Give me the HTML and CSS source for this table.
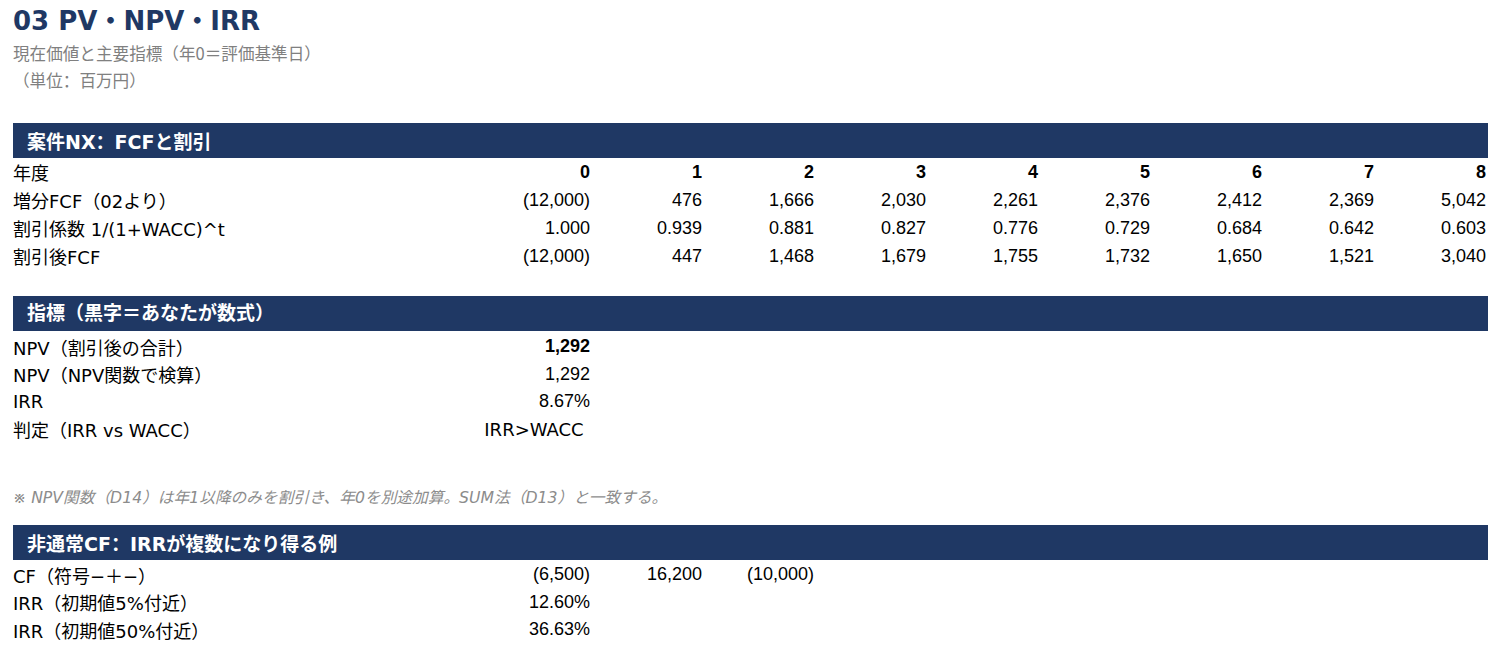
FILE: index.html
```html
<!DOCTYPE html>
<html lang="ja">
<head>
<meta charset="utf-8">
<link rel="stylesheet" href="styles.css">
</head>
<body>
<div class="page">
  <h1 class="title">03 PV・NPV・IRR</h1>
  <div class="sub">現在価値と主要指標（年0＝評価基準日）</div>
  <div class="sub unit">（単位<span lang="zh-CN">：</span>百万円）</div>

  <div class="bar bar1">案件NX<span lang="zh-CN">：</span>FCFと割引</div>
  <div class="grid g1">
    <div class="lbl">年度</div>
    <div class="num b">0</div><div class="num b">1</div><div class="num b">2</div><div class="num b">3</div><div class="num b">4</div><div class="num b">5</div><div class="num b">6</div><div class="num b">7</div><div class="num b">8</div>

    <div class="lbl">増分FCF（02より）</div>
    <div class="num">(12,000)</div><div class="num">476</div><div class="num">1,666</div><div class="num">2,030</div><div class="num">2,261</div><div class="num">2,376</div><div class="num">2,412</div><div class="num">2,369</div><div class="num">5,042</div>

    <div class="lbl">割引係数 1/(1+WACC)^t</div>
    <div class="num">1.000</div><div class="num">0.939</div><div class="num">0.881</div><div class="num">0.827</div><div class="num">0.776</div><div class="num">0.729</div><div class="num">0.684</div><div class="num">0.642</div><div class="num">0.603</div>

    <div class="lbl">割引後FCF</div>
    <div class="num">(12,000)</div><div class="num">447</div><div class="num">1,468</div><div class="num">1,679</div><div class="num">1,755</div><div class="num">1,732</div><div class="num">1,650</div><div class="num">1,521</div><div class="num">3,040</div>
  </div>

  <div class="bar bar2">指標（黒字＝あなたが数式）</div>
  <div class="grid g2">
    <div class="lbl">NPV（割引後の合計）</div><div class="num b">1,292</div>
    <div class="lbl">NPV（NPV関数で検算）</div><div class="num">1,292</div>
    <div class="lbl">IRR</div><div class="num">8.67%</div>
    <div class="lbl">判定（IRR vs WACC）</div><div class="txt">IRR&gt;WACC</div>
  </div>

  <div class="note">※ NPV関数（D14）は年1以降のみを割引き、年0を別途加算。SUM法（D13）と一致する。</div>

  <div class="bar bar3">非通常CF<span lang="zh-CN">：</span>IRRが複数になり得る例</div>
  <div class="grid g3">
    <div class="lbl">CF（符号−＋−）</div><div class="num">(6,500)</div><div class="num">16,200</div><div class="num">(10,000)</div>
    <div class="lbl">IRR（初期値5%付近）</div><div class="num">12.60%</div>
    <div class="lbl">IRR（初期値50%付近）</div><div class="num">36.63%</div>
  </div>
</div>
</body>
</html>
```

FILE: styles.css
```css
* { box-sizing: border-box; }
html, body { margin: 0; padding: 0; background: #ffffff; }
body {
  font-family: "DejaVu Sans", "Noto Sans CJK JP", sans-serif;
  color: #000;
}
.page {
  padding: 6px 12px 0 13px;
  width: 1500px;
}
.title {
  margin: 0;
  font-family: "DejaVu Sans", "Noto Sans CJK JP", sans-serif;
  font-weight: bold;
  font-size: 26px;
  line-height: 30px;
  color: #1f3864;
}
.sub {
  font-family: "Noto Sans CJK JP", sans-serif;
  font-size: 16.6px;
  line-height: 27px;
  color: #808080;
  margin-top: 4px;
}
.sub.unit { margin-top: 0; }
.bar {
  background: #1f3864;
  color: #fff;
  font-family: "DejaVu Sans", "Noto Sans CJK JP", sans-serif;
  font-weight: bold;
  font-size: 19px;
  height: 35px;
  line-height: 35px;
  padding-left: 14px;
  width: 1475px;
}
.bar1 { margin-top: 29px; }
.bar2 { margin-top: 26px; }
.bar3 { margin-top: 0; }
.grid {
  display: grid;
  grid-template-columns: 465px repeat(9, 112px);
  grid-auto-rows: 28px;
  align-items: center;
}
.g2 { grid-auto-rows: 27.5px; padding-top: 2px; }
.g3 { grid-auto-rows: 27.5px; padding-top: 1px; }
.lbl {
  grid-column: 1;
  font-family: "DejaVu Sans", "Noto Sans CJK JP", sans-serif;
  font-size: 18px;
  white-space: nowrap;
}
[lang="zh-CN"] { font-family: "Noto Sans CJK SC", sans-serif; }
.num {
  text-align: right;
  font-family: "Liberation Sans", Arial, sans-serif;
  font-size: 18px;
  white-space: nowrap;
}
.txt {
  text-align: center;
  font-family: "DejaVu Sans", sans-serif;
  font-size: 18px;
  white-space: nowrap;
}
.b { font-weight: bold; }
.note {
  font-family: "DejaVu Sans", "Noto Sans CJK JP", sans-serif;
  font-size: 15.7px;
  font-style: italic;
  color: #8c8c8c;
  height: 82px;
  padding-top: 45px;
  line-height: 20px;
}
```
